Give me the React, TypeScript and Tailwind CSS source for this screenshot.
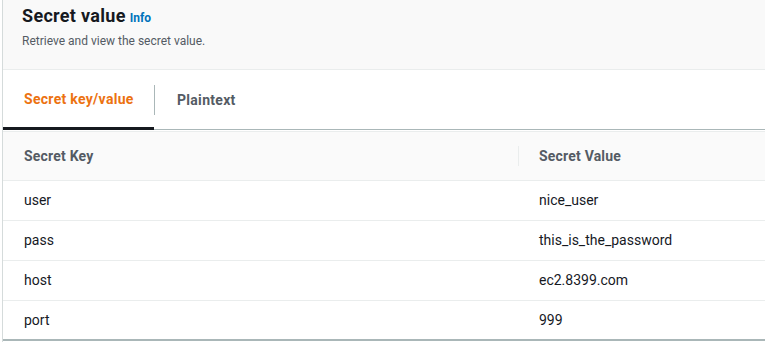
import React from 'react';

const rows = [
  { key: 'user', value: 'nice_user' },
  { key: 'pass', value: 'this_is_the_password' },
  { key: 'host', value: 'ec2.8399.com' },
  { key: 'port', value: '999' },
];

export default function App() {
  return (
    <div className="w-[765px] h-[342px] overflow-hidden bg-white pl-[2px] font-['Roboto',sans-serif]">
      <div className="h-full flex flex-col border-l border-[#d5dbdb]">
        {/* Header */}
        <div className="h-[70px] shrink-0 bg-[#f9f9f9] border-b border-[#eaeded] pl-[19px] pt-[5px]">
          <div className="flex items-baseline gap-[4px]">
            <h2 className="text-[18px] leading-[22px] font-bold tracking-[0.3px] text-[#16191f]">Secret value</h2>
            <a className="text-[12px] font-bold text-[#0073bb]">Info</a>
          </div>
          <p className="mt-[6px] text-[12px] leading-[16px] text-[#545b64]">Retrieve and view the secret value.</p>
        </div>

        {/* Tabs */}
        <div className="h-[60px] shrink-0 flex border-b border-[#aab7b8]">
          <div className="w-[151px] -mb-px flex items-center border-b-[3px] border-[#16191f] pl-[21px] pt-[2px]">
            <span className="text-[14px] font-bold tracking-[0.3px] text-[#ec7211]">Secret key/value</span>
          </div>
          <div className="flex items-center">
            <div className="h-[30px] w-px bg-[#aab7b8]" />
          </div>
          <div className="flex items-center pl-[22px] pt-[1px]">
            <span className="text-[14px] font-bold tracking-[0.3px] text-[#545b64]">Plaintext</span>
          </div>
        </div>

        {/* Table */}
        <div className="mt-px flex-1 flex flex-col">
          <div className="h-[50px] shrink-0 flex items-center bg-[#fafafa] border-y border-[#eaeded]">
            <div className="w-[515px] pl-[21px] text-[14px] font-bold tracking-[0.2px] text-[#545b64]">Secret Key</div>
            <div className="h-[20px] w-px bg-[#eaeded]" />
            <div className="pl-[20px] text-[14px] font-bold tracking-[0.2px] text-[#545b64]">Secret Value</div>
          </div>
          {rows.map((r, i) => (
            <div
              key={r.key}
              className={
                i === rows.length - 1
                  ? 'h-[40px] shrink-0 flex items-center border-b-2 border-[#aab7b8] text-[14px] text-[#16191f]'
                  : 'h-[40px] shrink-0 flex items-center border-b border-[#eaeded] text-[14px] text-[#16191f]'
              }
            >
              <div className="w-[516px] pl-[21px]">{r.key}</div>
              <div className="pl-[20px]">{r.value}</div>
            </div>
          ))}
        </div>
      </div>
    </div>
  );
}
